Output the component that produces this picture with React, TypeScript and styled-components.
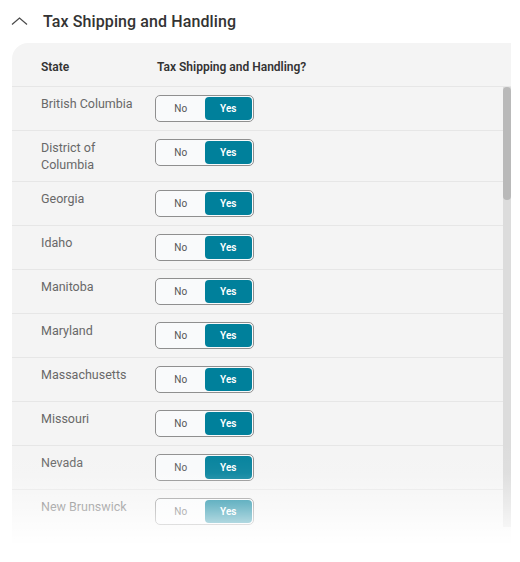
import styled, { createGlobalStyle } from "styled-components";

const GlobalStyle = createGlobalStyle`
  html, body {
    margin: 0;
    padding: 0;
    background: #ffffff;
    font-family: Roboto, "Noto Sans", sans-serif;
  }
`;

const STATES = [
  "British Columbia",
  "District of Columbia",
  "Georgia",
  "Idaho",
  "Manitoba",
  "Maryland",
  "Massachusetts",
  "Missouri",
  "Nevada",
  "New Brunswick",
  "New Jersey",
  "New Mexico",
  "New York",
  "Newfoundland and Labrador",
  "North Carolina",
  "North Dakota",
  "Nova Scotia",
  "Ohio",
  "Oklahoma",
  "Ontario",
  "Oregon",
  "Pennsylvania",
  "Prince Edward Island",
  "Quebec",
  "Rhode Island",
  "Saskatchewan",
  "South Carolina",
  "South Dakota",
  "Tennessee",
  "Texas",
  "Utah",
  "Vermont",
  "Virginia",
  "Washington",
  "West Virginia",
  "Wisconsin",
];

const Page = styled.div`
  width: 520px;
  height: 562px;
  overflow: hidden;
`;

const SectionHeader = styled.div`
  display: flex;
  align-items: center;
  gap: 15px;
  height: 40px;
  padding-left: 11px;
  margin-top: 1px;
`;

const SectionTitle = styled.h2`
  margin: 0;
  font-size: 16px;
  font-weight: 500;
  color: #333333;
  letter-spacing: 0.1px;
`;

const Panel = styled.div`
  position: relative;
  margin-left: 12px;
  margin-top: 2px;
  width: 499px;
  background: #f4f4f4;
  border-radius: 16px 0 0 0;
  padding-bottom: 16px;
`;

const Grid = styled.div`
  display: grid;
  grid-template-columns: 143px 1fr;
`;

const HeadRow = styled(Grid)`
  height: 44px;
  box-sizing: border-box;
  padding-top: 5px;
  align-items: center;
  border-bottom: 1px solid #e6e6e6;
`;

const HeadCell = styled.div<{ $indent: number }>`
  padding-left: ${(p) => p.$indent}px;
  font-size: 12px;
  font-weight: 600;
  color: #333333;
`;

const Body = styled.div`
  height: 440px;
  overflow-y: scroll;
  scrollbar-width: none;

  &::-webkit-scrollbar {
    display: none;
  }
`;

const ScrollTrack = styled.div`
  position: absolute;
  right: 0;
  top: 44px;
  width: 8px;
  height: 440px;
  background: #dcdcdc;
`;

const ScrollThumb = styled.div`
  width: 8px;
  height: 113px;
  border-radius: 4px;
  background: #b9b9b9;
`;

const Row = styled(Grid)`
  padding: 8px 0;
  border-bottom: 1px solid #e6e6e6;
  align-items: start;
`;

const StateName = styled.div`
  padding-left: 29px;
  padding-right: 14px;
  font-size: 12.5px;
  line-height: 17px;
  color: #686868;
`;

const Toggle = styled.div`
  display: flex;
  width: 95px;
  height: 23px;
  padding: 1px;
  border: 1px solid #8f8f8f;
  border-radius: 5px;
  background: #f9fafb;
`;

const Option = styled.button<{ $active: boolean }>`
  flex: 1;
  border: none;
  margin: 0;
  padding: 0;
  font-family: inherit;
  font-size: 10px;
  font-weight: ${(p) => (p.$active ? 600 : 400)};
  color: ${(p) => (p.$active ? "#ffffff" : "#555555")};
  background: ${(p) => (p.$active ? "#00809b" : "transparent")};
  border-radius: 4px;
  cursor: pointer;
`;

const Fade = styled.div`
  position: absolute;
  left: 0;
  right: 0;
  bottom: 0;
  height: 100px;
  pointer-events: none;
  background: linear-gradient(
    to bottom,
    rgba(255, 255, 255, 0) 0%,
    rgba(255, 255, 255, 0.08) 30%,
    rgba(255, 255, 255, 0.45) 62%,
    rgba(255, 255, 255, 0.96) 100%
  );
`;

const ChevronUp = () => (
  <svg width="17" height="10" viewBox="0 0 17 10" fill="none">
    <path d="M1 8.5 L8.5 2 L16 8.5" stroke="#4a4a4a" strokeWidth="1.2" />
  </svg>
);

const App = () => {
  return (
    <Page>
      <GlobalStyle />
      <SectionHeader>
        <ChevronUp />
        <SectionTitle>Tax Shipping and Handling</SectionTitle>
      </SectionHeader>
      <Panel>
        <HeadRow>
          <HeadCell $indent={29}>State</HeadCell>
          <HeadCell $indent={2}>Tax Shipping and Handling?</HeadCell>
        </HeadRow>
        <Body>
          {STATES.map((state) => (
            <Row key={state}>
              <StateName>{state}</StateName>
              <Toggle>
                <Option $active={false}>No</Option>
                <Option $active={true}>Yes</Option>
              </Toggle>
            </Row>
          ))}
        </Body>
        <ScrollTrack>
          <ScrollThumb />
        </ScrollTrack>
        <Fade />
      </Panel>
    </Page>
  );
};

export default App;
